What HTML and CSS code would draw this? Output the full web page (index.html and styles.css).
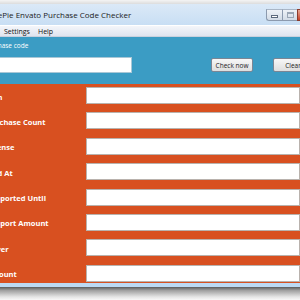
FILE: index.html
```html
<!DOCTYPE html>
<html>
<head>
<meta charset="utf-8">
<link rel="stylesheet" href="styles.css">
</head>
<body>
<div class="window">
  <div class="frame-top"></div>
  <div class="titlebar">
    <span class="title">CodePie Envato Purchase Code Checker</span>
    <div class="controls">
      <span class="ctl min"><i></i></span>
      <span class="ctl max"><i></i></span>
      <span class="ctl close"></span>
    </div>
  </div>
  <div class="menubar">
    <span class="menu-item">Settings</span>
    <span class="menu-item">Help</span>
  </div>
  <div class="search">
    <label class="search-label">Purchase code</label>
    <div class="search-row">
      <div class="code-input"></div>
      <button class="btn check">Check now</button>
      <button class="btn clear">Clear</button>
    </div>
  </div>
  <div class="results">
    <div class="row"><span class="lbl">Icon</span><div class="field"></div></div>
    <div class="row"><span class="lbl">Purchase Count</span><div class="field"></div></div>
    <div class="row"><span class="lbl">License</span><div class="field"></div></div>
    <div class="row"><span class="lbl">Sold At</span><div class="field"></div></div>
    <div class="row"><span class="lbl">Supported Until</span><div class="field"></div></div>
    <div class="row"><span class="lbl">Support Amount</span><div class="field"></div></div>
    <div class="row"><span class="lbl">Buyer</span><div class="field"></div></div>
    <div class="row"><span class="lbl">Amount</span><div class="field"></div></div>
  </div>
  <div class="frame-bottom"></div>
  <div class="shadow"></div>
</div>
</body>
</html>
```
FILE: styles.css
```css
html, body {
  margin: 0;
  padding: 0;
  width: 300px;
  height: 300px;
  overflow: hidden;
  background: #ffffff;
}
.window {
  width: 300px;
  font-family: "Open Sans", "Noto Sans", sans-serif;
}
.frame-top {
  height: 4px;
  background: linear-gradient(#f4f4f4, #dcdcdc);
}
.titlebar {
  height: 21px;
  display: flex;
  align-items: center;
  justify-content: space-between;
  background: linear-gradient(#dbe9f7, #c8def4);
}
.title {
  font-size: 8px;
  color: #1b1b1b;
  margin-left: -17px;
  white-space: nowrap;
}
.controls {
  display: flex;
  flex: none;
  align-self: flex-start;
  margin-top: 5px;
  margin-right: -5px;
}
.ctl {
  height: 10px;
  flex: none;
  border: 1px solid #8c9aae;
  border-top-color: #a9b6c6;
  background: linear-gradient(#eef2f7, #d2dbe6);
  display: flex;
  align-items: center;
  justify-content: center;
}
.min {
  width: 15px;
  border-radius: 0 0 0 3px;
  border-right: none;
}
.min i {
  width: 5px;
  height: 1px;
  margin-top: 3px;
  background: #fff;
  border: 1px solid #5c6a7d;
}
.max {
  width: 14px;
  border-right: none;
}
.max i {
  width: 5px;
  height: 3px;
  border: 1px solid #9aa6b5;
  border-top-width: 2px;
}
.close {
  width: 6px;
  background: linear-gradient(#e8a592, #c7432a);
  border-color: #8d3b2c;
}
.menubar {
  height: 10px;
  display: flex;
  align-items: center;
  gap: 8px;
  padding-left: 4px;
  background: linear-gradient(#f4f6fa, #dfe4ef);
  border-top: 1px solid #ffffff;
  border-bottom: 1px solid #c9d1de;
}
.menu-item {
  font-size: 7px;
  color: #111;
}
.search {
  height: 47px;
  background: #3b9cc4;
  box-sizing: border-box;
  padding-top: 4px;
}
.search-label {
  display: block;
  font-size: 6.5px;
  line-height: 9px;
  color: #ffffff;
  margin-left: -16px;
  white-space: nowrap;
}
.search-row {
  display: flex;
  align-items: center;
  margin-top: 7px;
}
.code-input {
  flex: none;
  width: 140px;
  height: 14px;
  margin-left: -10px;
  background: #fff;
  border: 1px solid #a9c7d6;
}
.btn {
  flex: none;
  box-sizing: border-box;
  height: 14px;
  padding: 0;
  font-family: inherit;
  font-size: 6.5px;
  color: #1c1c1c;
  border: 1px solid #7b8694;
  border-radius: 2px;
  background: linear-gradient(#f7f7f7, #dedede);
}
.check {
  width: 42px;
  margin-left: 79px;
}
.clear {
  width: 40px;
  margin-left: 20px;
}
.results {
  height: 199px;
  background: #d85020;
  box-sizing: border-box;
  padding-top: 3px;
  display: flex;
  flex-direction: column;
  gap: 8.4px;
}
.row {
  display: flex;
  align-items: center;
  height: 17px;
  flex: none;
}
.lbl {
  width: 86px;
  flex: none;
  font-size: 7.5px;
  font-weight: bold;
  color: #ffffff;
  margin-left: -13.5px;
  padding-top: 2px;
  white-space: nowrap;
}
.field {
  flex: 1;
  height: 17px;
  margin-left: 13.5px;
  box-sizing: border-box;
  background: #ffffff;
  border: 1px solid #b9b2ad;
}
.frame-bottom {
  height: 4px;
  background: #bcd9f3;
}
.shadow {
  height: 14px;
  background: linear-gradient(#5a5a5a, #a0a0a0 25%, #e4e4e4 70%, #ffffff);
}
```
